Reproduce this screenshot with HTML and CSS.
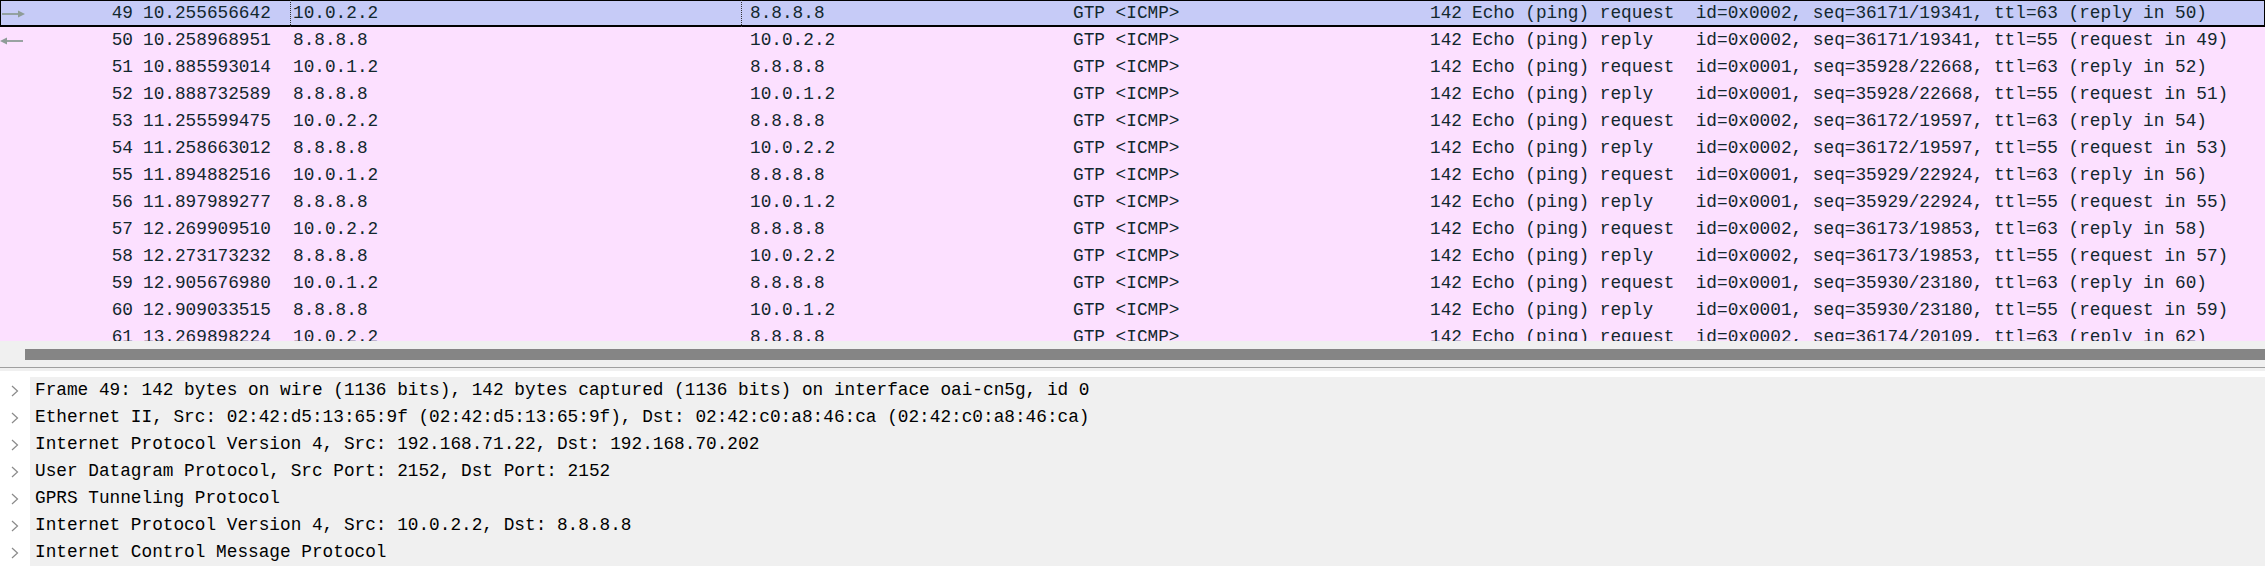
FILE: index.html
```html
<!DOCTYPE html>
<html>
<head>
<meta charset="utf-8">
<link rel="stylesheet" href="styles.css">
</head>
<body>
<div class="app">
  <div class="packet-list">
    <div class="row selected">
      <div class="c-no"><span class="rel rel-req"><svg width="24" height="10" viewBox="0 0 24 10"><line x1="0" y1="5" x2="17" y2="5" stroke="#8e9c98" stroke-width="1.8"/><polygon points="16,1.5 23,5 16,8.5" fill="#8e9c98"/></svg></span><span class="num">49</span></div>
      <div class="c-time">10.255656642</div><div class="c-src focus">10.0.2.2</div><div class="c-dst">8.8.8.8</div><div class="c-proto">GTP &lt;ICMP&gt;</div><div class="c-len">142</div><div class="c-info">Echo (ping) request  id=0x0002, seq=36171/19341, ttl=63 (reply in 50)</div>
    </div>
    <div class="row">
      <div class="c-no"><span class="rel rel-rep"><svg width="24" height="10" viewBox="0 0 24 10"><line x1="6" y1="5" x2="23" y2="5" stroke="#8e9c98" stroke-width="1.8"/><polygon points="7,1.5 0,5 7,8.5" fill="#8e9c98"/></svg></span><span class="num">50</span></div>
      <div class="c-time">10.258968951</div><div class="c-src">8.8.8.8</div><div class="c-dst">10.0.2.2</div><div class="c-proto">GTP &lt;ICMP&gt;</div><div class="c-len">142</div><div class="c-info">Echo (ping) reply    id=0x0002, seq=36171/19341, ttl=55 (request in 49)</div>
    </div>
    <div class="row">
      <div class="c-no"><span class="num">51</span></div>
      <div class="c-time">10.885593014</div><div class="c-src">10.0.1.2</div><div class="c-dst">8.8.8.8</div><div class="c-proto">GTP &lt;ICMP&gt;</div><div class="c-len">142</div><div class="c-info">Echo (ping) request  id=0x0001, seq=35928/22668, ttl=63 (reply in 52)</div>
    </div>
    <div class="row">
      <div class="c-no"><span class="num">52</span></div>
      <div class="c-time">10.888732589</div><div class="c-src">8.8.8.8</div><div class="c-dst">10.0.1.2</div><div class="c-proto">GTP &lt;ICMP&gt;</div><div class="c-len">142</div><div class="c-info">Echo (ping) reply    id=0x0001, seq=35928/22668, ttl=55 (request in 51)</div>
    </div>
    <div class="row">
      <div class="c-no"><span class="num">53</span></div>
      <div class="c-time">11.255599475</div><div class="c-src">10.0.2.2</div><div class="c-dst">8.8.8.8</div><div class="c-proto">GTP &lt;ICMP&gt;</div><div class="c-len">142</div><div class="c-info">Echo (ping) request  id=0x0002, seq=36172/19597, ttl=63 (reply in 54)</div>
    </div>
    <div class="row">
      <div class="c-no"><span class="num">54</span></div>
      <div class="c-time">11.258663012</div><div class="c-src">8.8.8.8</div><div class="c-dst">10.0.2.2</div><div class="c-proto">GTP &lt;ICMP&gt;</div><div class="c-len">142</div><div class="c-info">Echo (ping) reply    id=0x0002, seq=36172/19597, ttl=55 (request in 53)</div>
    </div>
    <div class="row">
      <div class="c-no"><span class="num">55</span></div>
      <div class="c-time">11.894882516</div><div class="c-src">10.0.1.2</div><div class="c-dst">8.8.8.8</div><div class="c-proto">GTP &lt;ICMP&gt;</div><div class="c-len">142</div><div class="c-info">Echo (ping) request  id=0x0001, seq=35929/22924, ttl=63 (reply in 56)</div>
    </div>
    <div class="row">
      <div class="c-no"><span class="num">56</span></div>
      <div class="c-time">11.897989277</div><div class="c-src">8.8.8.8</div><div class="c-dst">10.0.1.2</div><div class="c-proto">GTP &lt;ICMP&gt;</div><div class="c-len">142</div><div class="c-info">Echo (ping) reply    id=0x0001, seq=35929/22924, ttl=55 (request in 55)</div>
    </div>
    <div class="row">
      <div class="c-no"><span class="num">57</span></div>
      <div class="c-time">12.269909510</div><div class="c-src">10.0.2.2</div><div class="c-dst">8.8.8.8</div><div class="c-proto">GTP &lt;ICMP&gt;</div><div class="c-len">142</div><div class="c-info">Echo (ping) request  id=0x0002, seq=36173/19853, ttl=63 (reply in 58)</div>
    </div>
    <div class="row">
      <div class="c-no"><span class="num">58</span></div>
      <div class="c-time">12.273173232</div><div class="c-src">8.8.8.8</div><div class="c-dst">10.0.2.2</div><div class="c-proto">GTP &lt;ICMP&gt;</div><div class="c-len">142</div><div class="c-info">Echo (ping) reply    id=0x0002, seq=36173/19853, ttl=55 (request in 57)</div>
    </div>
    <div class="row">
      <div class="c-no"><span class="num">59</span></div>
      <div class="c-time">12.905676980</div><div class="c-src">10.0.1.2</div><div class="c-dst">8.8.8.8</div><div class="c-proto">GTP &lt;ICMP&gt;</div><div class="c-len">142</div><div class="c-info">Echo (ping) request  id=0x0001, seq=35930/23180, ttl=63 (reply in 60)</div>
    </div>
    <div class="row">
      <div class="c-no"><span class="num">60</span></div>
      <div class="c-time">12.909033515</div><div class="c-src">8.8.8.8</div><div class="c-dst">10.0.1.2</div><div class="c-proto">GTP &lt;ICMP&gt;</div><div class="c-len">142</div><div class="c-info">Echo (ping) reply    id=0x0001, seq=35930/23180, ttl=55 (request in 59)</div>
    </div>
    <div class="row">
      <div class="c-no"><span class="num">61</span></div>
      <div class="c-time">13.269898224</div><div class="c-src">10.0.2.2</div><div class="c-dst">8.8.8.8</div><div class="c-proto">GTP &lt;ICMP&gt;</div><div class="c-len">142</div><div class="c-info">Echo (ping) request  id=0x0002, seq=36174/20109, ttl=63 (reply in 62)</div>
    </div>
  </div>
  <div class="hscroll"><div class="thumb"></div></div>
  <div class="splitter"></div>
  <div class="details">
    <div class="tree-row"><span class="chev"><svg width="8" height="12" viewBox="0 0 8 12"><polyline points="1,1 6.5,6 1,11" fill="none" stroke="#8a8a8a" stroke-width="1.2"/></svg></span><span class="label">Frame 49: 142 bytes on wire (1136 bits), 142 bytes captured (1136 bits) on interface oai-cn5g, id 0</span></div>
    <div class="tree-row"><span class="chev"><svg width="8" height="12" viewBox="0 0 8 12"><polyline points="1,1 6.5,6 1,11" fill="none" stroke="#8a8a8a" stroke-width="1.2"/></svg></span><span class="label">Ethernet II, Src: 02:42:d5:13:65:9f (02:42:d5:13:65:9f), Dst: 02:42:c0:a8:46:ca (02:42:c0:a8:46:ca)</span></div>
    <div class="tree-row"><span class="chev"><svg width="8" height="12" viewBox="0 0 8 12"><polyline points="1,1 6.5,6 1,11" fill="none" stroke="#8a8a8a" stroke-width="1.2"/></svg></span><span class="label">Internet Protocol Version 4, Src: 192.168.71.22, Dst: 192.168.70.202</span></div>
    <div class="tree-row"><span class="chev"><svg width="8" height="12" viewBox="0 0 8 12"><polyline points="1,1 6.5,6 1,11" fill="none" stroke="#8a8a8a" stroke-width="1.2"/></svg></span><span class="label">User Datagram Protocol, Src Port: 2152, Dst Port: 2152</span></div>
    <div class="tree-row"><span class="chev"><svg width="8" height="12" viewBox="0 0 8 12"><polyline points="1,1 6.5,6 1,11" fill="none" stroke="#8a8a8a" stroke-width="1.2"/></svg></span><span class="label">GPRS Tunneling Protocol</span></div>
    <div class="tree-row"><span class="chev"><svg width="8" height="12" viewBox="0 0 8 12"><polyline points="1,1 6.5,6 1,11" fill="none" stroke="#8a8a8a" stroke-width="1.2"/></svg></span><span class="label">Internet Protocol Version 4, Src: 10.0.2.2, Dst: 8.8.8.8</span></div>
    <div class="tree-row"><span class="chev"><svg width="8" height="12" viewBox="0 0 8 12"><polyline points="1,1 6.5,6 1,11" fill="none" stroke="#8a8a8a" stroke-width="1.2"/></svg></span><span class="label">Internet Control Message Protocol</span></div>
  </div>
</div>
</body>
</html>
```

FILE: styles.css
```css
* { box-sizing: border-box; }

html, body {
  margin: 0;
  padding: 0;
  background: #ffffff;
}

body {
  font-family: "Liberation Mono", "DejaVu Sans Mono", monospace;
  font-size: 17.75px;
  color: #12272e;
}

.app {
  width: 2265px;
  height: 583px;
  overflow: hidden;
  background: #ffffff;
}

.packet-list {
  height: 341px;
  overflow: hidden;
  background: #fce0ff;
}

.row {
  display: grid;
  grid-template-columns: 138px 152px 452px 324px 234px 167px 1fr;
  height: 27px;
  line-height: 27px;
  background: #fce0ff;
  white-space: pre;
}

.row.selected {
  background: #c6cbf7;
  box-shadow: inset 1px 1px 0 #000, inset -1px -2px 0 #000;
}

.c-no {
  display: flex;
  align-items: center;
  padding-right: 5px;
}

.num { margin-left: auto; }

.rel {
  display: flex;
  align-items: center;
}

.rel-req { padding-left: 2px; padding-top: 1px; }
.rel-rep { padding-left: 0; }

.c-time { padding-left: 5px; }
.c-src { padding-left: 3px; }
.c-dst { padding-left: 8px; }
.c-proto { padding-left: 7px; }
.c-len { text-align: right; padding-right: 5px; }
.c-info { padding-left: 5px; }

.selected .focus {
  border-left: 1px dotted #333;
  border-right: 1px dotted #333;
  padding-left: 2px;
}

.hscroll {
  height: 27px;
  background: #f0f0f0;
  padding: 8px 0 0 25px;
  border-bottom: 1px solid #a0a0a0;
}

.thumb {
  height: 11px;
  background: #858585;
}

.splitter {
  height: 3px;
  background: #f0f0f0;
  border-bottom: 0;
}

.details {
  padding-top: 6px;
  background: #ffffff;
  color: #000;
}

.tree-row {
  display: flex;
  height: 27px;
  line-height: 27px;
  white-space: pre;
}

.chev {
  width: 30px;
  flex: 0 0 30px;
  display: flex;
  align-items: center;
  padding-left: 11px;
  background: #ffffff;
}

.label {
  flex: 1;
  background: #f0f0f0;
  padding-left: 5px;
}
```
